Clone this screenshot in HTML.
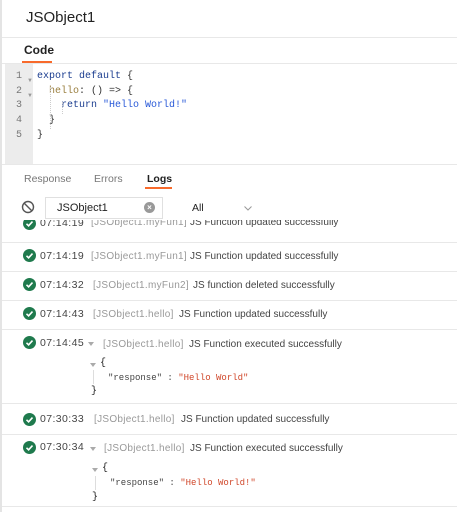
<!DOCTYPE html>
<html><head><style>
*{margin:0;padding:0;box-sizing:border-box}
body{width:457px;height:512px;overflow:hidden;background:#fff;font-family:"Liberation Sans",sans-serif;color:#333;position:relative}
.a{position:absolute;white-space:nowrap}
.mono{font-family:"Liberation Mono",monospace}
.hl{position:absolute;left:2px;right:0;height:1px;background:#e8e8e8}
.chk{position:absolute;width:13px;height:13px;border-radius:50%;background:#1f7a4d}
.chk svg{position:absolute;left:0;top:0}
.ts{font-size:10.5px;color:#444;letter-spacing:.4px}
.br{font-size:10px;color:#999;letter-spacing:.3px}
.msg{font-size:10px;color:#444}
.tri{width:0;height:0;border-left:3.5px solid transparent;border-right:3.5px solid transparent;border-top:4px solid #aaa;position:absolute}
</style></head><body>
<div class="a" style="left:0;top:0;width:2px;height:512px;background:#e4e4e4"></div>
<div class="a" style="left:26px;top:9px;font-size:15px;color:#222">JSObject1</div>
<div class="hl" style="top:37px"></div>
<div class="a" style="left:24px;top:43px;font-size:12px;font-weight:bold;color:#222">Code</div>
<div class="a" style="left:22px;top:61px;width:30px;height:2px;background:#f86a2b"></div>
<div class="hl" style="top:63px"></div>
<div class="a" style="left:5px;top:64px;width:28px;height:100px;background:#ececec"></div>
<div class="a mono" style="left:16px;top:70px;font-size:10px;color:#777;line-height:14.7px">1<br>2<br>3<br>4<br>5</div>
<div class="a" style="left:27px;top:74px;font-size:6px;color:#999;line-height:14.7px">▼<br>▼</div>
<div class="a mono" style="left:37px;top:70px;font-size:10px;line-height:14.7px;color:#333">
<span style="color:#1a3c8f">export default</span> {<br>
&nbsp;&nbsp;<span style="color:#9a7f3f">hello</span>: () =&gt; {<br>
&nbsp;&nbsp;&nbsp;&nbsp;<span style="color:#1a3c8f">return</span> <span style="color:#2a5ad8">"Hello World!"</span><br>
&nbsp;&nbsp;}<br>}</div>
<div class="a" style="left:50px;top:87px;width:1px;height:42px;border-left:1px dotted #ccc"></div>
<div class="a" style="left:62px;top:102px;width:1px;height:12px;border-left:1px dotted #ccc"></div>
<div class="hl" style="top:164px"></div>
<div class="a" style="left:24px;top:173px;font-size:10.5px;color:#777">Response</div>
<div class="a" style="left:94px;top:173px;font-size:10.5px;color:#777">Errors</div>
<div class="a" style="left:147px;top:173px;font-size:10.5px;font-weight:bold;color:#222">Logs</div>
<div class="a" style="left:145px;top:187px;width:27px;height:2px;background:#f86a2b"></div>
<svg class="a" style="left:21px;top:200px" width="14" height="14" viewBox="0 0 14 14"><circle cx="7" cy="7" r="5.5" fill="none" stroke="#555" stroke-width="1.4"/><line x1="3" y1="3" x2="11" y2="11" stroke="#555" stroke-width="1.4"/></svg>
<div class="a" style="left:45px;top:197px;width:118px;height:22px;border:1px solid #e0e0e0"></div>
<div class="a" style="left:57px;top:202px;font-size:11px;color:#222">JSObject1</div>
<div class="a" style="left:144px;top:202px;width:11px;height:11px;border-radius:50%;background:#999;color:#fff;font-size:8px;line-height:11px;text-align:center;font-weight:bold">×</div>
<div class="a" style="left:192px;top:202px;font-size:10.5px;color:#222">All</div>
<svg class="a" style="left:244px;top:206px" width="8" height="5"><path d="M0.5 0.5L4 4L7.5 0.5" fill="none" stroke="#999"/></svg>

<div class="a" style="left:0;top:220px;width:457px;height:292px;overflow:hidden">
<div class="chk" style="left:23px;top:-3px"><svg width="13" height="13"><path d="M3.5 6.8L5.6 8.8L9.5 4.6" fill="none" stroke="#fff" stroke-width="1.6"/></svg></div>
<div class="a ts" style="left:40px;top:-3px">07:14:19</div><div class="a br" style="left:91px;top:-3px">[JSObject1.myFun1]</div><div class="a msg" style="left:190px;top:-3px">JS Function updated successfully</div>
<div class="hl" style="top:22px"></div>
<div class="chk" style="left:23px;top:29px"><svg width="13" height="13"><path d="M3.5 6.8L5.6 8.8L9.5 4.6" fill="none" stroke="#fff" stroke-width="1.6"/></svg></div>
<div class="a ts" style="left:40px;top:30px">07:14:19</div><div class="a br" style="left:91px;top:31px">[JSObject1.myFun1]</div><div class="a msg" style="left:190px;top:31px">JS Function updated successfully</div>
<div class="hl" style="top:51px"></div>
<div class="chk" style="left:23px;top:58px"><svg width="13" height="13"><path d="M3.5 6.8L5.6 8.8L9.5 4.6" fill="none" stroke="#fff" stroke-width="1.6"/></svg></div>
<div class="a ts" style="left:40px;top:59px">07:14:32</div><div class="a br" style="left:93px;top:60px">[JSObject1.myFun2]</div><div class="a msg" style="left:193px;top:60px">JS function deleted successfully</div>
<div class="hl" style="top:80px"></div>
<div class="chk" style="left:23px;top:87px"><svg width="13" height="13"><path d="M3.5 6.8L5.6 8.8L9.5 4.6" fill="none" stroke="#fff" stroke-width="1.6"/></svg></div>
<div class="a ts" style="left:40px;top:88px">07:14:43</div><div class="a br" style="left:93px;top:89px">[JSObject1.hello]</div><div class="a msg" style="left:179px;top:89px">JS Function updated successfully</div>
<div class="hl" style="top:109px"></div>
<div class="chk" style="left:23px;top:116px"><svg width="13" height="13"><path d="M3.5 6.8L5.6 8.8L9.5 4.6" fill="none" stroke="#fff" stroke-width="1.6"/></svg></div>
<div class="a ts" style="left:40px;top:117px">07:14:45</div><div class="tri" style="left:88px;top:122px"></div><div class="a br" style="left:103px;top:119px">[JSObject1.hello]</div><div class="a msg" style="left:189px;top:119px">JS Function executed successfully</div>
<div class="tri" style="left:90px;top:143px"></div><div class="a mono" style="left:100px;top:138px;font-size:10px;color:#222">{</div>
<div class="a" style="left:93px;top:150px;width:1px;height:14px;background:#ddd"></div>
<div class="a mono" style="left:108px;top:153px;font-size:9px;color:#444">"response" : <span style="color:#d0472a">"Hello World"</span></div>
<div class="a mono" style="left:91px;top:166px;font-size:10px;color:#222">}</div>
<div class="hl" style="top:183px"></div>
<div class="chk" style="left:23px;top:193px"><svg width="13" height="13"><path d="M3.5 6.8L5.6 8.8L9.5 4.6" fill="none" stroke="#fff" stroke-width="1.6"/></svg></div>
<div class="a ts" style="left:40px;top:193px">07:30:33</div><div class="a br" style="left:94px;top:194px">[JSObject1.hello]</div><div class="a msg" style="left:181px;top:194px">JS Function updated successfully</div>
<div class="hl" style="top:214px"></div>
<div class="chk" style="left:23px;top:221px"><svg width="13" height="13"><path d="M3.5 6.8L5.6 8.8L9.5 4.6" fill="none" stroke="#fff" stroke-width="1.6"/></svg></div>
<div class="a ts" style="left:40px;top:221px">07:30:34</div><div class="tri" style="left:90px;top:227px"></div><div class="a br" style="left:104px;top:223px">[JSObject1.hello]</div><div class="a msg" style="left:190px;top:223px">JS Function executed successfully</div>
<div class="tri" style="left:92px;top:248px"></div><div class="a mono" style="left:102px;top:243px;font-size:10px;color:#222">{</div>
<div class="a" style="left:95px;top:256px;width:1px;height:14px;background:#ddd"></div>
<div class="a mono" style="left:110px;top:258px;font-size:9px;color:#444">"response" : <span style="color:#d0472a">"Hello World!"</span></div>
<div class="a mono" style="left:92px;top:272px;font-size:10px;color:#222">}</div>
<div class="hl" style="top:286px"></div>
</div>
</body></html>
